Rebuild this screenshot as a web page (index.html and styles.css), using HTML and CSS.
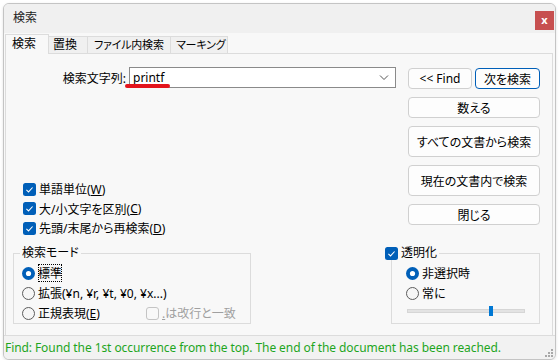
FILE: index.html
```html
<!DOCTYPE html>
<html>
<head>
<meta charset="UTF-8">
<title>検索</title>
<link rel="stylesheet" href="styles.css">
</head>
<body>
<div class="window">
	<div class="titlebar">
		<span class="title">検索</span>
		<span class="close">x</span>
	</div>
	<div class="tabs">
		<span class="tab active">検索</span><span class="tab">置換</span><span class="tab">ファイル内検索</span><span class="tab">マーキング</span>
	</div>
	<div class="panel">
		<div class="left">
			<div class="search-row">
				<span class="search-label">検索文字列:</span>
				<div class="combo">
					<span class="combo-text">printf</span>
					<svg class="chevron" width="10" height="6" viewBox="0 0 10 6"><path d="M1 0.5 L5 4.5 L9 0.5" fill="none" stroke="#555" stroke-width="1"/></svg>
					<span class="mark"></span>
				</div>
			</div>

			<div class="options">
				<div class="row"><svg class="box" width="13" height="13" viewBox="0 0 13 13"><rect width="13" height="13" rx="2.5" fill="#005fb8"/><path d="M3.4 6.9 L5.5 8.9 L9.6 4.5" fill="none" stroke="#fff" stroke-width="1.1"/></svg>単語単位(<u>W</u>)</div>
				<div class="row"><svg class="box" width="13" height="13" viewBox="0 0 13 13"><rect width="13" height="13" rx="2.5" fill="#005fb8"/><path d="M3.4 6.9 L5.5 8.9 L9.6 4.5" fill="none" stroke="#fff" stroke-width="1.1"/></svg>大/小文字を区別(<u>C</u>)</div>
				<div class="row"><svg class="box" width="13" height="13" viewBox="0 0 13 13"><rect width="13" height="13" rx="2.5" fill="#005fb8"/><path d="M3.4 6.9 L5.5 8.9 L9.6 4.5" fill="none" stroke="#fff" stroke-width="1.1"/></svg>先頭/末尾から再検索(<u>D</u>)</div>
			</div>

			<div class="group mode">
				<div class="group-title">検索モード</div>
				<div class="row"><svg class="box" width="13" height="13" viewBox="0 0 13 13"><circle cx="6.5" cy="6.5" r="6.5" fill="#005fb8"/><circle cx="6.5" cy="6.5" r="2.6" fill="#fff"/></svg><span class="focus">標準</span></div>
				<div class="row"><svg class="box" width="13" height="13" viewBox="0 0 13 13"><circle cx="6.5" cy="6.5" r="6" fill="#f6f6f6" stroke="#5c5c5c" stroke-width="1"/></svg>拡張(¥n, ¥r, ¥t, ¥0, ¥x...)</div>
				<div class="row">
					<span class="regex"><svg class="box" width="13" height="13" viewBox="0 0 13 13"><circle cx="6.5" cy="6.5" r="6" fill="#f6f6f6" stroke="#5c5c5c" stroke-width="1"/></svg>正規表現(<u>E</u>)</span>
					<span class="disabled"><svg class="box" width="13" height="13" viewBox="0 0 13 13"><rect x="0.5" y="0.5" width="12" height="12" rx="2.5" fill="none" stroke="#c4c4c4"/></svg><u>.</u>は改行と一致</span>
				</div>
			</div>
		</div>

		<div class="right">
			<div class="pair">
				<span class="btn find-prev">&lt;&lt; Find</span>
				<span class="btn default">次を検索</span>
			</div>
			<span class="btn">数える</span>
			<span class="btn tall">すべての文書から検索</span>
			<span class="btn tall">現在の文書内で検索</span>
			<span class="btn">閉じる</span>

			<div class="group trans">
				<div class="group-title"><svg class="box" width="13" height="13" viewBox="0 0 13 13"><rect width="13" height="13" rx="2.5" fill="#005fb8"/><path d="M3.4 6.9 L5.5 8.9 L9.6 4.5" fill="none" stroke="#fff" stroke-width="1.1"/></svg>透明化</div>
				<div class="row"><svg class="box" width="13" height="13" viewBox="0 0 13 13"><circle cx="6.5" cy="6.5" r="6.5" fill="#005fb8"/><circle cx="6.5" cy="6.5" r="2.6" fill="#fff"/></svg>非選択時</div>
				<div class="row"><svg class="box" width="13" height="13" viewBox="0 0 13 13"><circle cx="6.5" cy="6.5" r="6" fill="#f6f6f6" stroke="#5c5c5c" stroke-width="1"/></svg>常に</div>
				<div class="slider"><span class="thumb"></span></div>
			</div>
		</div>
	</div>
	<div class="status">
		<span class="status-text">Find: Found the 1st occurrence from the top. The end of the document has been reached.</span>
		<svg class="grip" width="9" height="9" viewBox="0 0 9 9" fill="#a8a8a8"><rect x="7" y="1" width="2" height="2"/><rect x="4" y="4" width="2" height="2"/><rect x="7" y="4" width="2" height="2"/><rect x="1" y="7" width="2" height="2"/><rect x="4" y="7" width="2" height="2"/><rect x="7" y="7" width="2" height="2"/></svg>
	</div>
</div>
</body>
</html>
```

FILE: styles.css
```css
body {
  margin: 0;
  background-color: #ffffff;
  font-family: "Noto Sans", "Noto Sans CJK JP", sans-serif;
  font-size: 12px;
  font-feature-settings: "palt";
  color: #000;
}

.window {
  box-sizing: border-box;
  margin: 3px 0 0 3px;
  width: 553px;
  height: 357px;
  border: 1px solid #c4c4c4;
  border-radius: 6px;
  background-color: #f8f8f8;
  display: flex;
  flex-direction: column;
  overflow: hidden;
  box-shadow: 0 1px 3px rgba(0, 0, 0, 0.12);
}

/* title bar */
.titlebar {
  height: 29px;
  flex: none;
  background-color: #f0f0f0;
  display: flex;
  align-items: flex-start;
  justify-content: space-between;
}

.title {
  margin: 7px 0 0 9px;
  line-height: 14px;
  color: #222;
}

.close {
  margin: 7px 1px 0 0;
  width: 19px;
  height: 19px;
  background-color: #c75050;
  color: #fff;
  font-weight: bold;
  font-size: 11px;
  line-height: 17px;
  text-align: center;
}

/* tabs */
.tabs {
  height: 20px;
  flex: none;
  display: flex;
  align-items: flex-end;
  padding-left: 1px;
  white-space: nowrap;
}

.tab {
  box-sizing: border-box;
  height: 17px;
  line-height: 16px;
  padding: 0 4px;
  background-color: #f0f0f0;
  border: 1px solid #dcdcdc;
  border-bottom: none;
  border-left: none;
}

.tab:nth-child(2) { width: 39px; }
.tab:nth-child(3) { width: 83px; padding-left: 6px; font-size: 11px; letter-spacing: -0.2px; }
.tab:nth-child(4) { width: 57px; padding-left: 5px; font-size: 11px; letter-spacing: -0.2px; }

.tab.active {
  width: 44px;
  height: 20px;
  line-height: 18px;
  padding-left: 6px;
  background-color: #f8f8f8;
  border-left: 1px solid #dcdcdc;
  position: relative;
  margin-bottom: -1px;
}

/* panel */
.panel {
  flex: 1;
  margin: 0 2px 0 1px;
  border: 1px solid #dcdcdc;
  border-bottom: none;
  padding: 13px 12px 11px 7px;
  display: flex;
  gap: 11px;
}

.left {
  flex: 1;
  display: flex;
  flex-direction: column;
}

.right {
  width: 132px;
  flex: none;
  display: flex;
  flex-direction: column;
  gap: 8px;
  padding-top: 1px;
}

.search-row {
  display: flex;
  align-items: center;
  gap: 3px;
}

.search-label {
  width: 113px;
  text-align: right;
}

.combo {
  box-sizing: border-box;
  position: relative;
  width: 267px;
  height: 21px;
  background-color: #fff;
  border: 1px solid #8a8a8a;
  display: flex;
  align-items: center;
  justify-content: space-between;
  padding: 0 6px 0 3px;
}

.combo-text {
  line-height: 16px;
}

.mark {
  position: absolute;
  left: -5px;
  top: 16px;
  width: 45px;
  height: 4px;
  border-radius: 2px;
  background-color: #e3141c;
}

.options {
  margin-top: auto;
  margin-bottom: 15px;
  padding-left: 10px;
}

.row {
  display: flex;
  align-items: center;
  height: 19.5px;
  white-space: nowrap;
}

.box {
  flex: none;
  margin-right: 3px;
}

u {
  text-underline-offset: 1px;
}

/* group boxes */
.group {
  box-sizing: border-box;
  height: 71px;
  border: 1px solid #dcdcdc;
}

.group-title {
  display: flex;
  align-items: center;
  width: fit-content;
  height: 14px;
  line-height: 14px;
  margin-top: -8px;
  padding: 0 2px;
  background-color: #f8f8f8;
}

.group .row {
  height: 20px;
}

.mode {
  width: 238px;
  padding: 0 0 0 8px;
}

.mode .group-title {
  margin-left: -2px;
  margin-bottom: 3px;
}

.focus {
  outline: 1px dotted #000;
  outline-offset: -1px;
}

.regex {
  display: flex;
  align-items: center;
  width: 124px;
}

.disabled {
  display: flex;
  align-items: center;
  color: #a0a0a0;
}

.trans {
  margin: auto 0 0 -17px;
  padding: 0 0 0 14px;
}

.trans .group-title {
  margin-left: -21px;
  padding-left: 0;
  margin-bottom: 3px;
}

.slider {
  position: relative;
  margin: 6px 0 0 1px;
  width: 118px;
  height: 4px;
  background-color: #e3e3e3;
  border: 1px solid #d6d6d6;
  box-sizing: border-box;
}

.thumb {
  position: absolute;
  left: 81px;
  top: -4px;
  width: 4px;
  height: 10px;
  background-color: #0078d4;
}

/* buttons */
.pair {
  display: flex;
  gap: 3px;
}

.btn {
  box-sizing: border-box;
  height: 21px;
  border: 1px solid #d0d0d0;
  border-radius: 4px;
  background-color: #fdfdfd;
  display: flex;
  align-items: center;
  justify-content: center;
  white-space: nowrap;
}

.find-prev {
  width: 65px;
}

.default {
  width: 66px;
  border-color: #005fb8;
}

.tall {
  height: 31px;
}

/* status bar */
.status {
  height: 23px;
  flex: none;
  border-top: 1px solid #dcdcdc;
  background-color: #f2f2f2;
  display: flex;
  align-items: center;
  justify-content: space-between;
  padding-left: 1px;
}

.status-text {
  color: #1ea51e;
  letter-spacing: -0.08px;
}

.grip {
  align-self: flex-end;
  margin: 0 2px 2px 0;
}
```
